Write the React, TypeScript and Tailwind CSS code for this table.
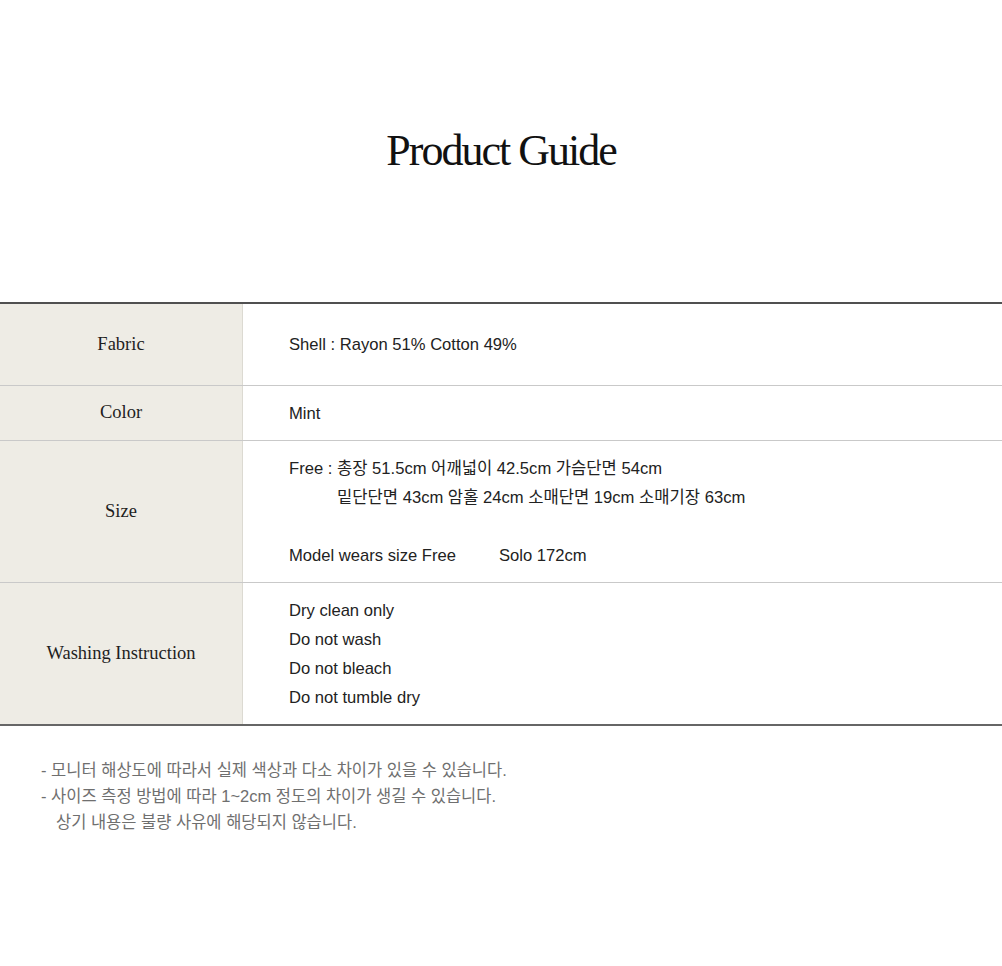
const serif = "font-['Liberation_Serif','DejaVu_Serif',serif]";
const sans = "font-['Liberation_Sans','Noto_Sans_CJK_KR',sans-serif]";

interface RowProps {
  label: string;
  children: React.ReactNode;
  height: string;
  last?: boolean;
}

function Row({ label, children, height, last }: RowProps) {
  return (
    <div className={`flex ${height} ${last ? "" : "border-b border-[#c9c9c9]"}`}>
      <div
        className={`w-[243px] shrink-0 flex items-center justify-center bg-[#eeece5] border-r border-[#dcdad2] text-[18.5px] text-[#1e1e1e] ${serif}`}
      >
        {label}
      </div>
      <div className={`flex-1 flex flex-col justify-center pl-[46px] text-[16.6px] leading-[29px] text-[#222] ${sans}`}>
        {children}
      </div>
    </div>
  );
}

export default function App() {
  return (
    <div className="w-[1002px] h-[966px] bg-white">
      {/* Title */}
      <h1
        className={`pt-[129px] text-center text-[44px] leading-[44px] tracking-[-2px] text-[#111] ${serif}`}
      >
        Product Guide
      </h1>

      {/* Guide table */}
      <div className="mt-[129px] border-t-2 border-b-2 border-t-[#505050] border-b-[#666]">
        <Row label="Fabric" height="h-[82px]">
          <p>Shell : Rayon 51% Cotton 49%</p>
        </Row>
        <Row label="Color" height="h-[55px]">
          <p>Mint</p>
        </Row>
        <Row label="Size" height="h-[142px]">
          <p>Free : 총장 51.5cm 어깨넓이 42.5cm 가슴단면 54cm</p>
          <p className="pl-[48px]">밑단단면 43cm 암홀 24cm 소매단면 19cm 소매기장 63cm</p>
          <p>&nbsp;</p>
          <p>
            <span className="inline-block w-[210px]">Model wears size Free</span>
            Solo 172cm
          </p>
        </Row>
        <Row label="Washing Instruction" height="h-[141px]" last>
          <p>Dry clean only</p>
          <p>Do not wash</p>
          <p>Do not bleach</p>
          <p>Do not tumble dry</p>
        </Row>
      </div>

      {/* Notes */}
      <div className={`mt-[31px] pl-[41px] text-[16.5px] leading-[26px] text-[#6f6f6f] ${sans}`}>
        <p>- 모니터 해상도에 따라서 실제 색상과 다소 차이가 있을 수 있습니다.</p>
        <p>- 사이즈 측정 방법에 따라 1~2cm 정도의 차이가 생길 수 있습니다.</p>
        <p className="pl-[15px]">상기 내용은 불량 사유에 해당되지 않습니다.</p>
      </div>
    </div>
  );
}
